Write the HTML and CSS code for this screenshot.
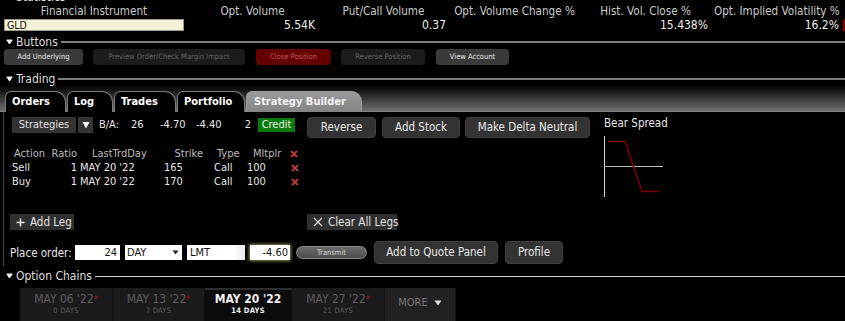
FILE: index.html
```html
<!DOCTYPE html>
<html>
<head>
<meta charset="utf-8">
<link rel="stylesheet" href="styles.css">
</head>
<body>
<div class="page">
  <div class="sect sect-stats">
    <svg class="tri" width="7" height="6" viewBox="0 0 7 6"><path d="M0.8 1 L6.2 1 L3.5 5 Z" fill="#eee" stroke="#eee" stroke-width="1" stroke-linejoin="round"/></svg>
    <span class="sect-label">Statistics</span><span class="sect-line"></span>
  </div>
  <div class="stats">
    <div class="sh">Financial Instrument</div>
    <div class="sh">Opt. Volume</div>
    <div class="sh">Put/Call Volume</div>
    <div class="sh">Opt. Volume Change %</div>
    <div class="sh">Hist. Vol. Close %</div>
    <div class="sh">Opt. Implied Volatility %</div>
    <div></div>
    <div class="sym">GLD</div>
    <div class="sv">5.54K</div>
    <div class="sv">0.37</div>
    <div class="sv"></div>
    <div class="sv">15.438%</div>
    <div class="sv">16.2%</div>
    <div class="redmark"></div>
  </div>

  <div class="sect sect-buttons">
    <svg class="tri" width="7" height="6" viewBox="0 0 7 6"><path d="M0.8 1 L6.2 1 L3.5 5 Z" fill="#eee" stroke="#eee" stroke-width="1" stroke-linejoin="round"/></svg>
    <span class="sect-label">Buttons</span><span class="sect-line"></span>
  </div>
  <div class="btnrow">
    <div class="sb sb-on w-under">Add Underlying</div>
    <div class="sb sb-off w-prev">Preview Order/Check Margin Impact</div>
    <div class="sb sb-red w-close">Close Position</div>
    <div class="sb sb-off w-rev">Reverse Position</div>
    <div class="sb sb-on w-acct">View Account</div>
  </div>

  <div class="sect sect-trading">
    <svg class="tri" width="7" height="6" viewBox="0 0 7 6"><path d="M0.8 1 L6.2 1 L3.5 5 Z" fill="#eee" stroke="#eee" stroke-width="1" stroke-linejoin="round"/></svg>
    <span class="sect-label">Trading</span><span class="sect-line"></span>
  </div>
  <div class="tabbar">
    <div class="tab t-orders">Orders</div>
    <div class="tab t-log">Log</div>
    <div class="tab t-trades">Trades</div>
    <div class="tab t-port">Portfolio</div>
    <div class="tab tab-active t-sb">Strategy Builder</div>
  </div>

  <div class="panel">
    <div class="left">
      <div class="toolrow">
        <div class="dark-btn strat">Strategies</div>
        <div class="dark-btn drop"><svg width="8" height="8" viewBox="0 0 8 8"><path d="M0.5 1 L7.5 1 L4 7.5 Z" fill="#fff"/></svg></div>
        <span class="ba ba-lbl">B/A:</span>
        <span class="ba ba-26">26</span>
        <span class="ba ba-b">-4.70</span>
        <span class="ba ba-a">-4.40</span>
        <span class="ba ba-2">2</span>
        <span class="credit">Credit</span>
        <div class="rbtn w-reverse">Reverse</div>
        <div class="rbtn w-stock">Add Stock</div>
        <div class="rbtn w-delta">Make Delta Neutral</div>
      </div>

      <div class="legs">
        <div class="lh c1">Action</div>
        <div class="lh c2">Ratio</div>
        <div class="lh c3">LastTrdDay</div>
        <div class="lh c4">Strike</div>
        <div class="lh c5">Type</div>
        <div class="lh c6">Mltplr</div>
        <div class="lh c7"><svg class="x" width="8" height="8" viewBox="0 0 8 8"><path d="M1 1 L7 7 M7 1 L1 7" stroke="#b23a3a" stroke-width="2"/></svg></div>

        <div class="lv c1">Sell</div>
        <div class="lv c2">1</div>
        <div class="lv c3">MAY 20 '22</div>
        <div class="lv c4">165</div>
        <div class="lv c5">Call</div>
        <div class="lv c6">100</div>
        <div class="lv c7"><svg class="x" width="8" height="8" viewBox="0 0 8 8"><path d="M1 1 L7 7 M7 1 L1 7" stroke="#b23a3a" stroke-width="2"/></svg></div>

        <div class="lv c1">Buy</div>
        <div class="lv c2">1</div>
        <div class="lv c3">MAY 20 '22</div>
        <div class="lv c4">170</div>
        <div class="lv c5">Call</div>
        <div class="lv c6">100</div>
        <div class="lv c7"><svg class="x" width="8" height="8" viewBox="0 0 8 8"><path d="M1 1 L7 7 M7 1 L1 7" stroke="#b23a3a" stroke-width="2"/></svg></div>
      </div>

      <div class="legrow">
        <div class="flat-btn w-addleg"><svg width="9" height="9" viewBox="0 0 9 9"><path d="M4.5 0.5 V8.5 M0.5 4.5 H8.5" stroke="#eee" stroke-width="1.4"/></svg><span>Add Leg</span></div>
        <div class="flat-btn w-clear"><svg width="10" height="10" viewBox="0 0 10 10"><path d="M1 1 L9 9 M9 1 L1 9" stroke="#ddd" stroke-width="1.1"/></svg><span>Clear All Legs</span></div>
      </div>

      <div class="orderrow">
        <span class="po">Place order:</span>
        <div class="inp i-qty">24</div>
        <div class="inp i-tif"><span>DAY</span><svg width="7" height="5" viewBox="0 0 7 5"><path d="M0.5 0.5 L6.5 0.5 L3.5 4.5 Z" fill="#222"/></svg></div>
        <div class="inp i-type">LMT</div>
        <div class="inp i-px">-4.60</div>
        <div class="transmit">Transmit</div>
        <div class="rbtn w-quote">Add to Quote Panel</div>
        <div class="rbtn w-prof">Profile</div>
      </div>
    </div>

    <div class="right">
      <div class="bs-title">Bear Spread</div>
      <svg class="chart" width="62" height="62" viewBox="0 0 62 62">
        <path d="M0.5 0 V61" stroke="#d8d8d8" stroke-width="1"/>
        <path d="M0 30.5 H59" stroke="#bcbcbc" stroke-width="1"/>
        <path d="M4 5.5 H21 L38 55.5 H55" stroke="#7a0000" stroke-width="1.6" fill="none"/>
      </svg>
    </div>
  </div>

  <div class="sect sect-chains">
    <svg class="tri" width="7" height="6" viewBox="0 0 7 6"><path d="M0.8 1 L6.2 1 L3.5 5 Z" fill="#eee" stroke="#eee" stroke-width="1" stroke-linejoin="round"/></svg>
    <span class="sect-label">Option Chains</span><span class="sect-line line-light"></span>
  </div>
  <div class="exps">
    <div class="exp e1"><div class="ed">MAY 06 '22<span class="star">*</span></div><div class="dd">0 DAYS</div></div>
    <div class="exp e2"><div class="ed">MAY 13 '22<span class="star">*</span></div><div class="dd">7 DAYS</div></div>
    <div class="exp exp-active e3"><div class="ed">MAY 20 '22</div><div class="dd">14 DAYS</div></div>
    <div class="exp e4"><div class="ed">MAY 27 '22<span class="star">*</span></div><div class="dd">21 DAYS</div></div>
    <div class="exp exp-more e5"><span>MORE</span><svg width="8" height="6" viewBox="0 0 8 6"><path d="M0.5 0.5 L7.5 0.5 L4 5.5 Z" fill="#ddd"/></svg></div>
  </div>
</div>
</body>
</html>
```

FILE: styles.css
```css
html, body {
  margin: 0;
  padding: 0;
  background: #000;
}
body {
  width: 845px;
  height: 321px;
  overflow: hidden;
  color: #ddd;
  font-family: "DejaVu Sans Condensed", "DejaVu Sans", sans-serif;
  font-stretch: condensed;
  font-size: 11px;
}
.page {
  width: 845px;
}

/* section headers */
.sect {
  display: flex;
  align-items: center;
  height: 12px;
}
.tri {
  margin-left: 6px;
  margin-right: 3px;
  flex: none;
}
.sect-label {
  font-size: 12px;
  color: #ddd;
  line-height: 12px;
}
.sect-line {
  flex: 1;
  height: 2px;
  background: #7d7d7d;
  margin-left: 3px;
}
.line-light {
  height: 1px;
  background: #d6d6d6;
}
.sect-stats {
  margin-top: -9px;
}

/* statistics */
.stats {
  display: grid;
  grid-template-columns: 180px repeat(5, 125px) 2px;
  grid-template-rows: 15px 13px;
  column-gap: 6px;
  margin-left: 4px;
  align-items: center;
}
.sh {
  text-align: center;
  font-size: 11.6px;
  color: #c9c9c9;
  white-space: nowrap;
}
.sv {
  text-align: right;
  font-size: 12px;
  color: #ececec;
  white-space: nowrap;
}
.sym {
  height: 12px;
  background: #f3f2d6;
  border: 1px solid #9a9a88;
  box-sizing: border-box;
  color: #111;
  font-size: 10.5px;
  line-height: 10px;
  padding-left: 2px;
}
.redmark {
  width: 3px;
  height: 12px;
  background: #8a0000;
  margin-left: -2px;
}

.sect-buttons {
  margin-top: 5px;
}

/* buttons row */
.btnrow {
  display: flex;
  margin: 1px 0 0 4px;
  height: 16px;
}
.sb {
  height: 16px;
  border-radius: 4px;
  font-size: 7.5px;
  line-height: 16px;
  text-align: center;
  white-space: nowrap;
  flex: none;
}
.sb-on {
  background: #3a3a3a;
  color: #e6e6e6;
}
.sb-off {
  background: #1c1c1c;
  color: #616161;
}
.sb-red {
  background: #650000;
  color: #c25a5a;
}
.w-under { width: 79px; }
.w-prev { width: 152px; margin-left: 10px; }
.w-close { width: 75px; margin-left: 11px; }
.w-rev { width: 84px; margin-left: 10px; }
.w-acct { width: 73px; margin-left: 11px; }

.sect-trading {
  margin-top: 8px;
}

/* tab bar */
.tabbar {
  height: 27px;
  display: flex;
  align-items: flex-end;
  gap: 1px;
  padding-left: 5px;
  background: linear-gradient(#000 0%, #1a1a1a 25%, #6e6e6e 95%, #8a8a8a 100%);
  box-sizing: border-box;
}
.tab {
  height: 21px;
  box-sizing: border-box;
  background: #000;
  border: 1px solid #7a7a7a;
  border-bottom: none;
  border-radius: 6px 11px 0 0;
  color: #fff;
  font-weight: bold;
  font-size: 11px;
  line-height: 19px;
  padding-left: 6px;
  white-space: nowrap;
  flex: none;
}
.tab-active {
  background: linear-gradient(#9a9a9a, #858585);
  border-color: #9a9a9a;
  color: #f2f2f2;
  padding-left: 7px;
}
.t-orders { width: 61px; }
.t-log { width: 46px; }
.t-trades { width: 62px; }
.t-port { width: 68px; }
.t-sb { width: 116px; }

/* panel */
.panel {
  display: flex;
  height: 154px;
  margin-left: 3px;
  border-left: 1px solid #4a4a4a;
  box-sizing: border-box;
  padding-left: 8px;
}
.left {
  width: 580px;
  flex: none;
}
.right {
  margin-left: 12px;
  padding-top: 5px;
}
.toolrow {
  display: flex;
  align-items: center;
  margin-top: 4px;
  height: 22px;
}
.dark-btn {
  height: 16px;
  background: #333;
  color: #e0e0e0;
  line-height: 16px;
  text-align: center;
  flex: none;
  margin-top: -5px;
}
.strat { width: 64px; }
.drop {
  width: 15px;
  margin-left: 2px;
  display: flex;
  align-items: center;
  justify-content: center;
}
.ba {
  color: #e6e6e6;
  white-space: nowrap;
  flex: none;
  margin-top: -5px;
}
.ba-lbl { width: 32px; margin-left: 6px; }
.ba-26 { width: 29px; }
.ba-b { width: 36px; }
.ba-a { width: 44px; }
.ba-2 { width: 18px; text-align: right; padding-right: 7px; box-sizing: border-box; }
.credit {
  width: 37px;
  height: 14px;
  background: #0b7a0b;
  color: #e6f5e6;
  line-height: 14px;
  text-align: center;
  flex: none;
  margin-top: -5px;
}
.rbtn {
  height: 21px;
  box-sizing: border-box;
  background: #333;
  border: 1px solid #3e3e3e;
  border-radius: 4px;
  color: #e8e8e8;
  font-size: 11.5px;
  line-height: 19px;
  text-align: center;
  flex: none;
  white-space: nowrap;
}
.w-reverse { width: 69px; margin-left: 12px; }
.w-stock { width: 78px; margin-left: 6px; }
.w-delta { width: 125px; margin-left: 5px; }

/* legs */
.legs {
  display: grid;
  grid-template-columns: 36px 29px 80px 52px 33px 43px 18px;
  grid-auto-rows: 14px;
  margin-top: 9px;
  align-items: center;
  line-height: 14px;
}
.lh { color: #bdbdbd; white-space: nowrap; }
.lv { color: #e6e6e6; white-space: nowrap; }
.lh.c1 { padding-left: 2px; }
.c2 { text-align: right; }
.lh.c3 { padding-left: 15px; }
.lv.c3 { padding-left: 3px; }
.lh.c4 { text-align: right; padding-right: 6px; }
.lv.c4 { padding-left: 7px; }
.lh.c5 { padding-left: 8px; }
.lv.c5 { padding-left: 5px; }
.lh.c6 { padding-left: 11px; }
.lv.c6 { padding-left: 5px; }
.c7 { display: flex; align-items: center; height: 14px; }
.lh.c7 { padding-left: 5px; }
.lv.c7 { padding-left: 6px; }
.x { flex: none; display: block; }

.legrow {
  display: flex;
  margin-top: 25px;
  height: 16px;
}
.flat-btn {
  display: flex;
  align-items: center;
  height: 16px;
  background: #2f2f2f;
  color: #e4e4e4;
  font-size: 11.5px;
  box-sizing: border-box;
  padding-left: 6px;
  flex: none;
  white-space: nowrap;
}
.flat-btn svg { margin-right: 5px; flex: none; }
.w-addleg { width: 64px; margin-left: -2px; }
.w-clear { width: 90px; margin-left: 233px; }

.orderrow {
  display: flex;
  align-items: center;
  margin-top: 11px;
  height: 23px;
}
.po {
  width: 65px;
  flex: none;
  color: #e6e6e6;
  font-size: 11.5px;
  margin-left: -2px;
}
.inp {
  height: 15px;
  box-sizing: border-box;
  background: #fff;
  color: #111;
  font-size: 11px;
  line-height: 15px;
  flex: none;
  white-space: nowrap;
}
.i-qty { width: 45px; text-align: right; padding-right: 3px; }
.i-tif {
  width: 57px;
  margin-left: 5px;
  padding: 0 3px 0 2px;
  display: flex;
  align-items: center;
  justify-content: space-between;
}
.i-type {
  width: 58px;
  margin-left: 5px;
  padding-left: 3px;
  background: linear-gradient(90deg, #fff 80%, #e8e8e8);
}
.i-px {
  width: 40px;
  margin-left: 5px;
  text-align: right;
  padding-right: 2px;
  box-shadow: 0 0 3px 1px #8c8a5c;
}
.transmit {
  width: 71px;
  height: 13px;
  box-sizing: border-box;
  margin-left: 6px;
  background: linear-gradient(#6a6a6a, #4e4e4e);
  border: 1px solid #8a8a8a;
  border-radius: 7px;
  color: #cfcfcf;
  font-size: 7.5px;
  line-height: 11px;
  text-align: center;
  flex: none;
}
.w-quote { width: 124px; height: 23px; line-height: 21px; margin-left: 7px; }
.w-prof { width: 58px; height: 23px; line-height: 21px; margin-left: 7px; }

.bs-title {
  color: #e6e6e6;
  font-size: 11.5px;
  line-height: 12px;
}
.chart {
  display: block;
  margin-top: 7px;
}

/* option chains */
.sect-chains {
  margin-top: 4px;
}
.exps {
  display: flex;
  margin: 6px 0 0 20px;
  height: 33px;
}
.exp {
  height: 33px;
  box-sizing: border-box;
  background: #1b1b1b;
  border-right: 1px solid #101010;
  text-align: center;
  color: #5c5c5c;
  flex: none;
  padding-top: 4px;
}
.exp-active {
  background: #0c0c0c;
  border-top: 2px solid #2e2e2e;
  color: #f0f0f0;
  padding-top: 2px;
}
.ed {
  font-size: 12px;
  line-height: 14px;
  white-space: nowrap;
}
.exp-active .ed { font-weight: bold; }
.dd {
  font-size: 7.5px;
  line-height: 10px;
  letter-spacing: 0.3px;
}
.exp-active .dd { font-weight: bold; }
.star { color: #a01818; font-size: 9px; vertical-align: top; }
.e1 { width: 93px; }
.e2 { width: 92px; }
.e3 { width: 87px; }
.e4 { width: 93px; }
.e5 {
  width: 71px;
  background: #212121;
  display: flex;
  align-items: center;
  justify-content: center;
  gap: 6px;
  padding-top: 0;
  padding-bottom: 4px;
  color: #777;
}
```
